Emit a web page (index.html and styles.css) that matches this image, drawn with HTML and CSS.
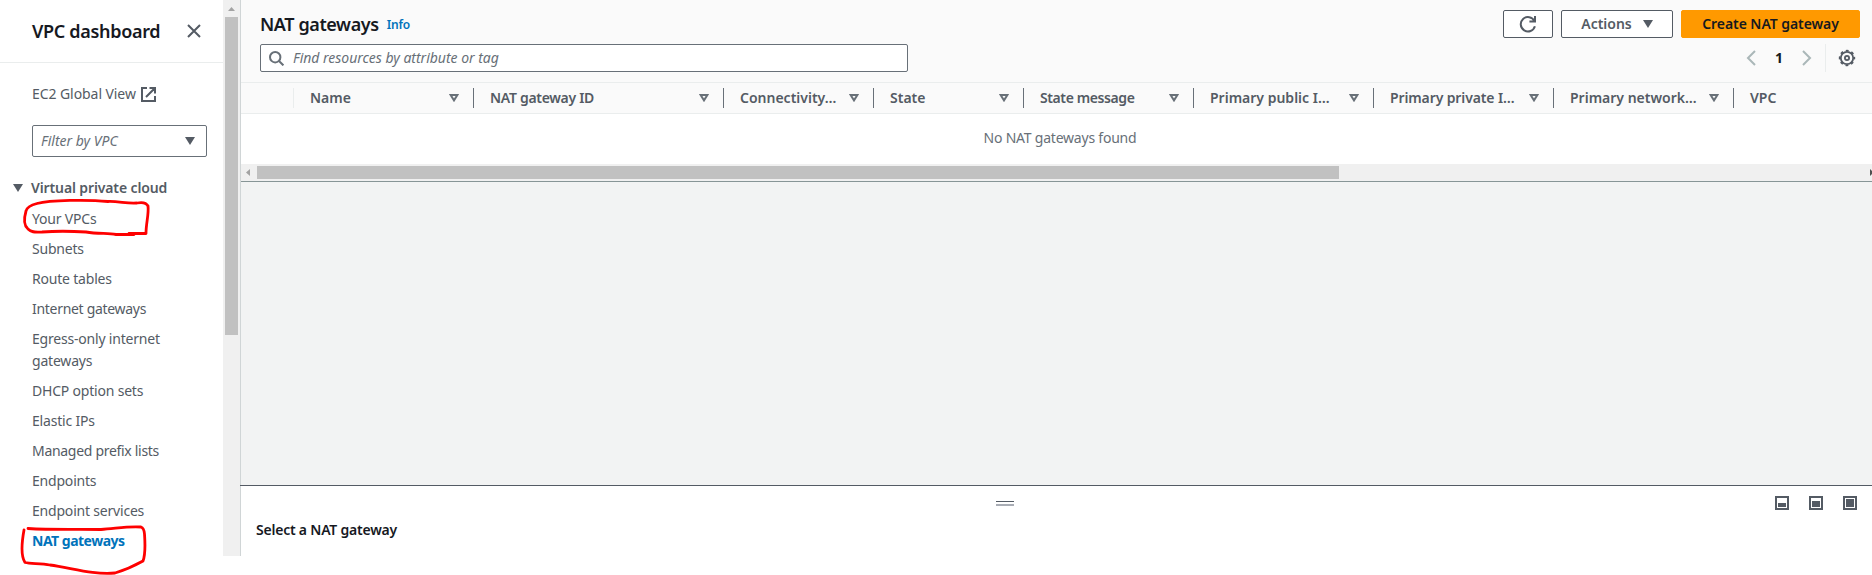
FILE: index.html
```html
<!DOCTYPE html>
<html lang="en">
<head>
<meta charset="utf-8">
<title>NAT gateways | VPC dashboard</title>
<link rel="stylesheet" href="styles.css">
</head>
<body>
<div class="app">
  <aside class="sidebar">
    <div class="side-body">
      <header class="side-head">
        <h2 class="side-title">VPC dashboard</h2>
        <svg class="close" width="14" height="14" viewBox="0 0 14 14"><path d="M1 1l12 12M13 1L1 13" fill="none" stroke="#545b64" stroke-width="2"/></svg>
      </header>
      <a class="global">EC2 Global View
        <svg width="15" height="15" viewBox="0 0 15 15" fill="none" stroke="#545b64" stroke-width="2"><path d="M6 1H1v13h13V9M8.5 1H14v5.5M14 1L5 10"/></svg>
      </a>
      <div class="select"><span>Filter by VPC</span><svg width="10" height="8" viewBox="0 0 10 8"><path d="M0 0h10L5 8z" fill="#545b64"/></svg></div>
      <h3 class="group"><svg width="10" height="8" viewBox="0 0 10 8"><path d="M0 0h10L5 8z" fill="#545b64"/></svg><span>Virtual private cloud</span></h3>
      <nav class="links">
        <a>Your VPCs</a>
        <a>Subnets</a>
        <a>Route tables</a>
        <a class="tight">Internet gateways</a>
        <a>Egress-only internet<br>gateways</a>
        <a>DHCP option sets</a>
        <a>Elastic IPs</a>
        <a class="tight">Managed prefix lists</a>
        <a>Endpoints</a>
        <a>Endpoint services</a>
        <a class="active">NAT gateways</a>
      </nav>
    </div>
    <div class="vscroll">
      <svg width="7" height="4" viewBox="0 0 7 4"><path d="M0 4h7L3.5 0z" fill="#a3a3a3"/></svg>
      <div class="vthumb"></div>
    </div>
  </aside>
  <main class="main">
    <section class="toolbar">
      <div class="row-top">
        <h1 class="title">NAT gateways</h1><a class="info">Info</a>
        <div class="buttons">
          <button class="btn refresh"><svg width="18" height="18" viewBox="0 0 18 18" fill="none" stroke="#545b64" stroke-width="2"><path d="M15.9 11.2A7.2 7.2 0 1 1 15.4 6M16 1v5.6h-5.6"/></svg></button>
          <button class="btn actions"><span>Actions</span><svg width="10" height="8" viewBox="0 0 10 8"><path d="M0 0h10L5 8z" fill="#545b64"/></svg></button>
          <button class="btn primary"><span>Create NAT gateway</span></button>
        </div>
      </div>
      <div class="row-search">
        <div class="search"><svg width="15" height="15" viewBox="0 0 15 15" fill="none" stroke="#687078" stroke-width="2"><circle cx="6.2" cy="6.2" r="5.2"/><path d="M10 10l4.400 4.400"/></svg><span>Find resources by attribute or tag</span></div>
        <div class="pager">
          <svg width="10" height="16" viewBox="0 0 10 16" fill="none" stroke="#aab7b8" stroke-width="2"><path d="M9 1L2 8l7 7"/></svg>
          <b>1</b>
          <svg width="10" height="16" viewBox="0 0 10 16" fill="none" stroke="#aab7b8" stroke-width="2"><path d="M1 1l7 7-7 7"/></svg>
          <i class="divider"></i>
          <svg width="18" height="18" viewBox="-9 -9 18 18" fill="none" stroke="#545b64"><circle r="6.2" stroke-width="1.8"/><circle r="7.4" stroke-width="1.6" stroke-dasharray="2.9 2.91" stroke-dashoffset="1.45"/><circle r="2.1" stroke-width="1.8"/></svg>
        </div>
      </div>
    </section>
    <div class="thead">
      <div class="th check"></div>
      <div class="th c180"><span>Name</span><svg class="sort" width="10" height="8" viewBox="0 0 10 8"><path d="M1.6 1h6.8L5 6.4z"/></svg></div>
      <div class="th c250 tight"><span>NAT gateway ID</span><svg class="sort" width="10" height="8" viewBox="0 0 10 8"><path d="M1.6 1h6.8L5 6.4z"/></svg></div>
      <div class="th c150"><span>Connectivity…</span><svg class="sort" width="10" height="8" viewBox="0 0 10 8"><path d="M1.6 1h6.8L5 6.4z"/></svg></div>
      <div class="th c150"><span>State</span><svg class="sort" width="10" height="8" viewBox="0 0 10 8"><path d="M1.6 1h6.8L5 6.4z"/></svg></div>
      <div class="th c170 snug"><span>State message</span><svg class="sort" width="10" height="8" viewBox="0 0 10 8"><path d="M1.6 1h6.8L5 6.4z"/></svg></div>
      <div class="th c180"><span>Primary public I…</span><svg class="sort" width="10" height="8" viewBox="0 0 10 8"><path d="M1.6 1h6.8L5 6.4z"/></svg></div>
      <div class="th c180 snug"><span>Primary private I…</span><svg class="sort" width="10" height="8" viewBox="0 0 10 8"><path d="M1.6 1h6.8L5 6.4z"/></svg></div>
      <div class="th c180"><span>Primary network…</span><svg class="sort" width="10" height="8" viewBox="0 0 10 8"><path d="M1.6 1h6.8L5 6.4z"/></svg></div>
      <div class="th last"><span>VPC</span></div>
    </div>
    <div class="empty"><span>No NAT gateways found</span></div>
    <div class="hscroll">
      <svg width="4" height="7" viewBox="0 0 4 7"><path d="M4 0v7L0 3.5z" fill="#a3a3a3"/></svg>
      <div class="hthumb"></div>
      <svg class="right" width="2" height="7" viewBox="0 0 2 7"><path d="M0 0v7l2-2V2z" fill="#505050"/></svg>
    </div>
    <div class="blank"></div>
    <section class="panel">
      <svg class="handle" width="18" height="6" viewBox="0 0 18 6"><path d="M0 1h18v1H0z" fill="#545b64"/><path d="M0 4h18v2H0z" fill="#a9adb5"/></svg>
      <div class="sizes">
        <svg width="14" height="14" viewBox="0 0 14 14"><path d="M1 1h12v12H1z" fill="none" stroke="#545b64" stroke-width="2"/><path d="M3 7h8v4H3z" fill="#545b64"/></svg>
        <svg width="14" height="14" viewBox="0 0 14 14"><path d="M1 1h12v12H1z" fill="none" stroke="#545b64" stroke-width="2"/><path d="M3 5h8v6H3z" fill="#545b64"/></svg>
        <svg width="14" height="14" viewBox="0 0 14 14"><path d="M1 1h12v12H1z" fill="none" stroke="#545b64" stroke-width="2"/><path d="M3 3h8v8H3z" fill="#545b64"/></svg>
      </div>
      <p class="prompt">Select a NAT gateway</p>
    </section>
  </main>
</div>
<svg class="marker" width="240" height="575" viewBox="0 0 240 575" fill="none" stroke="#fe0000" stroke-width="2.8" stroke-linecap="round" stroke-linejoin="round">
  <path d="M37 203.500C31 205 27 207 26 211C24 218 23 225 28 229C32 233 36 232 42 232C55 231 70 231 86 232C98 234 108 233 116 234.500H134M129 233.500L146 233.500C146 223 149 214 148 206C146 202 142 202 137 203C128 204 118 201 108 201.500C88 199.500 50 200 37 203.500"/>
  <path d="M28 528.500C53 530 77 529 101 529.500C114 529 126 526 141 527Q144 528 144.500 534C145 543 146 553 143 561C134 566 125 570 115 573C93 575 72 568 50 565C41 563 31 564 25 562.500C20 555 22 541 24 530"/>
</svg>
</body>
</html>
```
FILE: styles.css
```css
* { box-sizing: border-box; }
body { margin: 0; background: #fff; color: #16191f; font: 14px/22px "Noto Sans", "Open Sans", sans-serif; overflow: hidden; }
h1, h2, h3, p { margin: 0; font-weight: 600; }
svg { display: block; flex: none; }
span { white-space: nowrap; }
.app { display: flex; height: 556px; width: 1872px; }
.sidebar { display: flex; width: 241px; border-right: 1px solid #d0d5d6; }
.side-body { width: 223px; color: #545b64; }
.side-head { display: flex; justify-content: space-between; align-items: center; height: 63px; padding: 0 22px 0 32px; border-bottom: 1px solid #eaeded; }
.side-title { font-size: 18px; color: #16191f; letter-spacing: -0.32px; }
.global { display: flex; align-items: center; gap: 5px; margin: 20px 0 0 32px; letter-spacing: -0.07px; }
.select { display: flex; align-items: center; justify-content: space-between; width: 175px; height: 32px; margin: 20px 0 0 32px; padding: 0 11px 0 8px; border: 1px solid #687078; border-radius: 2px; font-style: italic; color: #687078; letter-spacing: 0; }
.group { display: flex; align-items: center; gap: 8px; margin: 20px 0 0 13px; font-size: 14px; letter-spacing: -0.12px; }
.links { display: flex; flex-direction: column; gap: 8px; margin: 9px 0 0 32px; letter-spacing: -0.2px; }
.tight { letter-spacing: -0.3px; }
.snug { letter-spacing: -0.12px; }
.c170.snug { letter-spacing: -0.4px; }
.active { color: #0073bb; font-weight: 700; letter-spacing: -0.5px; }
.vscroll { width: 17px; background: #f0f0f0; padding: 7px 2px 0; display: flex; flex-direction: column; align-items: center; gap: 6px; }
.vthumb { width: 13px; height: 318px; background: #c1c1c1; }
.main { flex: 1; min-width: 0; display: flex; flex-direction: column; }
.toolbar { height: 83px; background: #fafafa; border-bottom: 1px solid #eaeded; padding: 10px 12px 0 19px; }
.row-top { display: flex; height: 28px; align-items: center; }
.title { font-size: 18px; letter-spacing: -0.4px; }
.info { margin: 2px 0 0 8px; font-size: 12px; font-weight: 600; color: #0073bb; letter-spacing: -0.2px; }
.buttons { display: flex; gap: 8px; margin-left: auto; }
.btn { display: flex; align-items: center; justify-content: center; height: 28px; padding: 0; border: 1px solid #545b64; border-radius: 2px; background: #fff; color: #545b64; font: 600 14px/22px "Noto Sans", sans-serif; }
.refresh { width: 50px; }
.actions { width: 112px; gap: 11px; }
.primary { width: 179px; background: #ff9900; border-color: #ff9900; color: #16191f; letter-spacing: -0.06px; }
.row-search { display: flex; justify-content: space-between; align-items: center; height: 28px; margin-top: 6px; }
.search { display: flex; align-items: center; gap: 9px; width: 648px; height: 28px; padding-left: 8px; border: 1px solid #687078; border-radius: 2px; background: #fff; color: #687078; font-style: italic; letter-spacing: -0.02px; }
.pager { display: flex; align-items: center; padding-right: 4px; }
.pager b { width: 46px; text-align: center; }
.divider { width: 1px; height: 28px; margin: 0 12px 0 13px; background: #eaeded; }
.thead { display: flex; height: 31px; background: #fafafa; border-bottom: 1px solid #eaeded; align-items: center; color: #545b64; font-weight: 600; }
.th { display: flex; align-items: center; justify-content: space-between; height: 20px; padding: 0 14px 0 16px; border-right: 1px solid #687078; }
.check { width: 53px; border-color: #eaeded; }
.c150 { width: 150px; }
.c170 { width: 170px; }
.c180 { width: 180px; }
.c250 { width: 250px; }
.last { border: 0; }
.sort path { fill: none; stroke: #687078; stroke-width: 2; }
.empty { height: 50px; padding: 0 0 3px 7px; display: flex; justify-content: center; align-items: center; color: #687078; letter-spacing: -0.22px; }
.hscroll { display: flex; align-items: center; height: 18px; padding-left: 5px; background: #f0f0f0; border-bottom: 1px solid #879596; }
.hthumb { width: 1082px; height: 13px; margin-left: 7px; background: #c1c1c1; }
.right { margin-left: auto; }
.blank { height: 303px; background: #f2f3f3; }
.panel { flex: 1; display: grid; grid-template-columns: 740px 18px 1fr; grid-template-rows: 33px 1fr; border-top: 1px solid #545b64; padding: 0 15px 0 16px; margin-left: -1px; }
.handle { grid-column: 2; margin-top: 14px; }
.sizes { display: flex; gap: 20px; justify-content: flex-end; margin-top: 10px; }
.prompt { grid-column: 1; letter-spacing: -0.22px; }
.marker { position: absolute; left: 0; top: 0; }
```
